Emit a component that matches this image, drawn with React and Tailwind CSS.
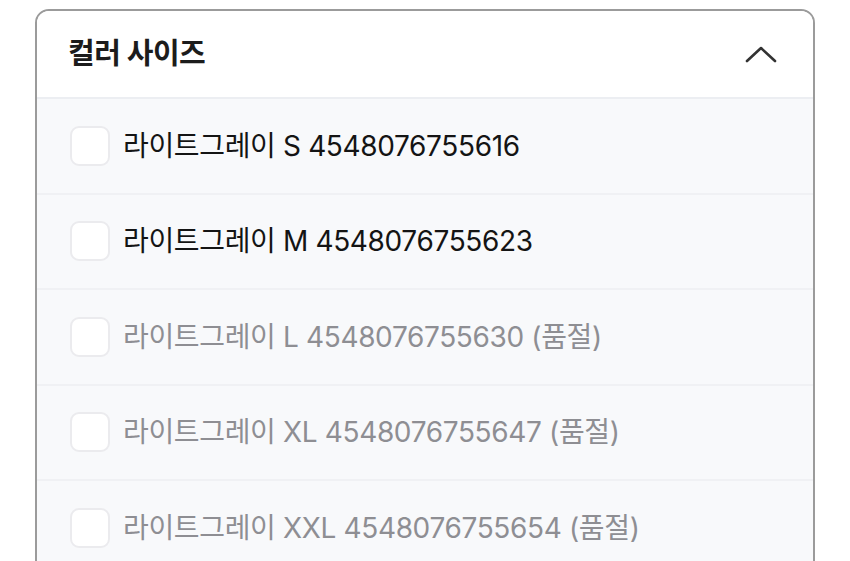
const options = [
  { id: 's', label: '라이트그레이 S 4548076755616', soldOut: false },
  { id: 'm', label: '라이트그레이 M 4548076755623', soldOut: false },
  { id: 'l', label: '라이트그레이 L 4548076755630 (품절)', soldOut: true },
  { id: 'xl', label: '라이트그레이 XL 4548076755647 (품절)', soldOut: true },
  { id: 'xxl', label: '라이트그레이 XXL 4548076755654 (품절)', soldOut: true },
];

const font = { fontFamily: 'Inter, "Noto Sans CJK KR", sans-serif' };

const App = () => {
  return (
    <div className="bg-white min-h-screen px-[35px] pt-[9px]" style={font}>
      <div className="border-2 border-[#9b9b9b] rounded-[14px] overflow-hidden">
        <div className="h-[88px] flex items-center justify-between pl-[31px] pr-[36px] border-b-2 border-[#eceef2] bg-white">
          <h2 className="text-[29px] font-bold text-[#1c1c1c] tracking-[-0.5px]">컬러 사이즈</h2>
          <svg width="32" height="18" viewBox="0 0 32 18" fill="none">
            <path d="M2 16 L16 3 L30 16" stroke="#333" strokeWidth="2.6" strokeLinecap="round" strokeLinejoin="round" />
          </svg>
        </div>
        <ul className="bg-[#f8f9fb]">
          {options.map((opt) => (
            <li key={opt.id} className="h-[95.5px] flex items-center pl-[33px] border-b-2 border-[#f0f1f4]">
              <span className="w-[40px] h-[40px] rounded-[9px] border-2 border-[#ebebee] bg-white shrink-0" />
              <span
                className={
                  'ml-[13px] text-[28px] tracking-[-0.35px] ' +
                  (opt.soldOut ? 'text-[#8e8e93]' : 'text-[#141414]')
                }
              >
                {opt.label}
              </span>
            </li>
          ))}
        </ul>
      </div>
    </div>
  );
};

export default App;
